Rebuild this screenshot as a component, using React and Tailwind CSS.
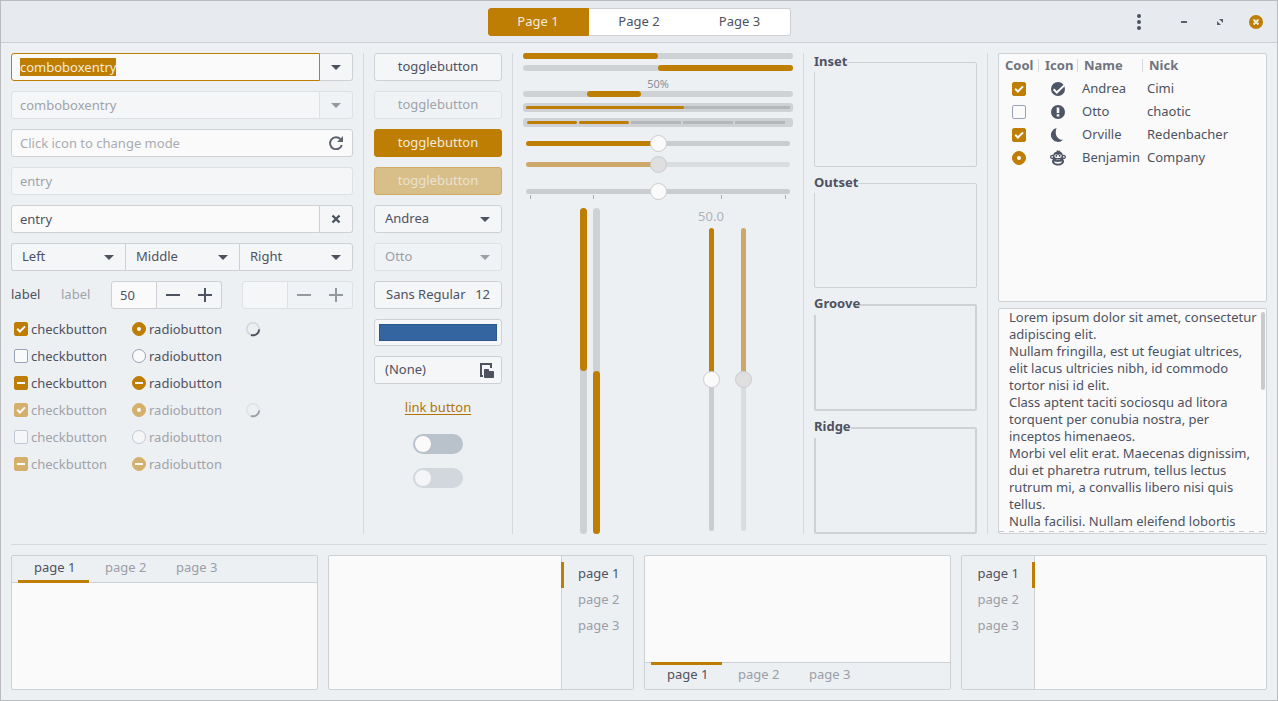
import { useEffect, useRef } from "react";

const LOREM = [
  "Lorem ipsum dolor sit amet, consectetur",
  "adipiscing elit.",
  "Nullam fringilla, est ut feugiat ultrices,",
  "elit lacus ultricies nibh, id commodo",
  "tortor nisi id elit.",
  "Class aptent taciti sociosqu ad litora",
  "torquent per conubia nostra, per",
  "inceptos himenaeos.",
  "Morbi vel elit erat. Maecenas dignissim,",
  "dui et pharetra rutrum, tellus lectus",
  "rutrum mi, a convallis libero nisi quis",
  "tellus.",
  "Nulla facilisi. Nullam eleifend lobortis",
].join("\n");

const noop = () => {};

function Arrow({ className = "" }) {
  return (
    <svg viewBox="0 0 10 5" className={`h-[5px] w-[10px] fill-current ${className}`} aria-hidden="true">
      <path d="M0 0h10L5 5z" />
    </svg>
  );
}

function Combo({ label, disabled, joined, className = "" }) {
  return (
    <div className={`relative flex h-7 min-w-0 ${disabled ? "text-[#9a9ea6]" : "text-[#4d5261]"}`}>
      <select
        aria-label={label}
        disabled={disabled}
        className={`w-full appearance-none border pr-7 pb-px pl-[10px] opacity-100 outline-none ${
          disabled ? "border-[#dde0e4] bg-[#f0f3f6]" : "border-[#cdd0d4] bg-[#f5f6f8]"
        } ${joined ? "border-r-0" : ""} ${className}`}
      >
        <option>{label}</option>
      </select>
      <Arrow className={`pointer-events-none absolute top-[12px] ${joined ? "right-[11px]" : "right-[12px]"}`} />
    </div>
  );
}

function Entry({ label, disabled, className = "", inputRef, ...rest }) {
  return (
    <input
      ref={inputRef}
      type="text"
      aria-label={label}
      disabled={disabled}
      className={`h-7 min-w-0 flex-1 border px-2 pb-px outline-none ${
        disabled ? "border-[#dde0e4] bg-[#f5f6f8] text-[#9fa3aa]" : "bg-[#fafafa] text-[#4d5261]"
      } ${className}`}
      {...rest}
    />
  );
}

function SideButton({ label, disabled, children }) {
  return (
    <button
      type="button"
      aria-label={label}
      disabled={disabled}
      className={`flex h-7 w-[33px] items-center justify-center rounded-r-[3px] border border-l-0 ${
        disabled ? "border-[#dde0e4] bg-[#f0f3f6] text-[#94989f]" : "border-[#cdd0d4] bg-[#f5f6f8] text-[#4d5261]"
      }`}
    >
      {children}
    </button>
  );
}

function Spin({ label, value, disabled }) {
  const tone = disabled ? "border-[#dde0e4] bg-[#f0f3f6] text-[#94989f]" : "border-[#cdd0d4] bg-[#f5f6f8] text-[#4d5261]";
  return (
    <div className="flex w-[111px]">
      <input
        type="text"
        inputMode="numeric"
        aria-label={label}
        disabled={disabled}
        defaultValue={value}
        className={`h-7 w-[46px] rounded-l-[3px] border px-2 pb-px outline-none ${
          disabled ? "border-[#dde0e4] bg-[#f5f6f8]" : "border-[#cdd0d4] bg-[#fafafa] text-[#4d5261]"
        }`}
      />
      <div className={`flex flex-1 rounded-r-[3px] border border-l-0 ${tone}`}>
        <button type="button" disabled={disabled} aria-label="Decrease" className="flex flex-1 items-center justify-center">
          <svg viewBox="0 0 14 14" className="h-[14px] w-[14px] fill-current"><path d="M0 6h14v2H0z" /></svg>
        </button>
        <button type="button" disabled={disabled} aria-label="Increase" className="flex flex-1 items-center justify-center">
          <svg viewBox="0 0 14 14" className="h-[14px] w-[14px] fill-current"><path d="M0 6h6V0h2v6h6v2H8v6H6V8H0z" /></svg>
        </button>
      </div>
    </div>
  );
}

function Mark({ type, state, disabled, label, name }) {
  const on = state !== "off";
  return (
    <span className="inline-grid h-[14px] w-[14px] shrink-0 place-items-center">
      <input
        type={type}
        name={name}
        aria-label={label}
        disabled={disabled}
        checked={state === "on"}
        onChange={noop}
        ref={(el) => {
          if (el) el.indeterminate = state === "mixed";
        }}
        className={`col-start-1 row-start-1 h-[14px] w-[14px] appearance-none border ${
          type === "radio" ? "rounded-full" : "rounded-[2px]"
        } ${
          on
            ? disabled ? "border-[#d5b06c] bg-[#d5b06c]" : "border-[#be7d03] bg-[#be7d03]"
            : disabled ? "border-[#c2c8d3] bg-[#f4f6f8]" : "border-[#98a3b8] bg-[#fafafa]"
        }`}
      />
      {on && (
        <svg viewBox="0 0 14 14" className="pointer-events-none col-start-1 row-start-1 h-[14px] w-[14px]" aria-hidden="true">
          {state === "mixed" && <path d="M3 6h8v2H3z" fill="#fafafa" />}
          {state === "on" && type === "radio" && <circle cx="7" cy="7" r="2" fill="#fafafa" />}
          {state === "on" && type === "checkbox" && <path d="M3.2 6.8l2.7 2.700L11 4.400" fill="none" stroke="#fafafa" strokeWidth="2" />}
        </svg>
      )}
    </span>
  );
}

function Option({ type, state, disabled, name }) {
  return (
    <label className={`flex h-5 items-center gap-[3px] pl-[3px] ${disabled ? "text-[#9fa3aa]" : ""}`}>
      <Mark type={type} state={state} disabled={disabled} name={name} />
      {type === "radio" ? "radiobutton" : "checkbutton"}
    </label>
  );
}

function Spinner({ dim }) {
  return (
    <svg viewBox="0 0 14 14" className={`ml-[3px] h-[14px] w-[14px] self-center overflow-visible ${dim ? "opacity-50" : ""}`} role="img" aria-label="Busy">
      <circle cx="7" cy="7" r="6.200" fill="none" stroke="#d3d6da" strokeWidth="1.600" />
      <path d="M13.200 7.500A6.200 6.200 0 0 1 5 13" fill="none" stroke="#4d5261" strokeWidth="2" />
    </svg>
  );
}

function Toggle({ className, disabled, pressed }) {
  return (
    <button type="button" disabled={disabled} aria-pressed={!!pressed} className={`h-7 rounded-[3px] border pb-px text-center ${className}`}>
      togglebutton
    </button>
  );
}

function Switch({ disabled, label }) {
  return (
    <div className="flex h-6 items-center justify-center">
      <button
        type="button"
        role="switch"
        aria-checked="false"
        aria-label={label}
        disabled={disabled}
        className={`flex h-5 w-[50px] items-center rounded-full px-[2px] ${disabled ? "bg-[#d1d7dc]" : "bg-[#b9c1cb]"}`}
      >
        <span className={`h-4 w-4 rounded-full ${disabled ? "bg-[#f3f5f6]" : "bg-[#fafafa]"}`} />
      </button>
    </div>
  );
}

const THUMB =
  "block m-0 appearance-none rounded-full outline-none [&::-webkit-slider-thumb]:h-[17px] [&::-webkit-slider-thumb]:w-[17px] [&::-webkit-slider-thumb]:appearance-none [&::-webkit-slider-thumb]:rounded-full [&::-webkit-slider-thumb]:border [&::-webkit-slider-thumb]:border-[#cbccd0]";
const THUMB_ON = "[&::-webkit-slider-thumb]:bg-[#fafafa]";
const THUMB_OFF = "[&::-webkit-slider-thumb]:bg-[#dfdfdf]";

function Separator() {
  return <div className="bg-[#d5d8dc]" />;
}

function Frame({ title, thick }) {
  return (
    <fieldset className={`min-h-0 min-w-0 flex-1 rounded-[2px] border-[#cfd2d5] ${thick ? "border-2" : "border"}`}>
      <legend className={`font-bold ${thick ? "-ml-[2px] h-5" : "-ml-px h-[19px]"}`}>{title}</legend>
    </fieldset>
  );
}

const ICONS = {
  check: (
    <svg viewBox="0 0 16 16" className="ml-[11px] h-4 w-4">
      <circle cx="8" cy="8" r="7" fill="#4d5566" />
      <path d="M3.600 8.200l3.200 3.300L15 3.600" fill="none" stroke="#fafafa" strokeWidth="2" />
    </svg>
  ),
  alert: (
    <svg viewBox="0 0 16 16" className="ml-[11px] h-4 w-4">
      <circle cx="8" cy="8" r="7" fill="#4d5566" />
      <path d="M6.700 3.500h2.600V9H6.700zM6.700 10.200h2.600v2.200H6.700z" fill="#fafafa" />
    </svg>
  ),
  moon: (
    <svg viewBox="0 0 16 16" className="ml-[11px] h-4 w-4">
      <path d="M6.600 1A7 7 0 1 0 13 12.700C7.400 13 4 7 6.600 1z" fill="#4d5566" />
    </svg>
  ),
  monkey: (
    <svg viewBox="0 0 16 16" className="ml-[11px] h-4 w-4">
      <path d="M7 0l1.500 1.100L10.300.4 9.800 1.600c1.700.5 2.700 1.800 3 3.300 1.600-.3 3.200.6 3.200 2S14.500 9.200 13 8.900c.7.700 1 1.500 1 2.300 0 2.600-2.600 4.300-6 4.300s-6-1.700-6-4.300c0-.8.3-1.600 1-2.300C1.500 9.200 0 8.300 0 6.900s1.600-2.300 3.200-2C3.500 3.200 5 1.800 6.800 1.400z" fill="#4d5566" />
      <path d="M4.400 5.800c0-1.600 3-1.900 3.600-.5.6-1.400 3.600-1.100 3.600.5 0 1.500-.9 2.200-2 2.200H6.400c-1.100 0-2-.7-2-2.200z" fill="#fafafa" />
      <path d="M1.300 6.900c0-.6.700-1 1.500-.9v1.800c-.8.100-1.500-.3-1.500-.9zM14.700 6.900c0-.6-.7-1-1.500-.9v1.800c.8.100 1.500-.3 1.500-.9zM4 11.300c1 .8 7 .8 8 0-.3 1.800-2 2.500-4 2.500s-3.700-.7-4-2.500z" fill="#fafafa" />
      <path d="M5.600 5h1.500v1.800H5.600zM8.900 5h1.500v1.800H8.900z" fill="#4d5566" />
      <path d="M6.600 9h1v.7h-1zM8.600 9h1v.7h-1z" fill="#fafafa" />
    </svg>
  ),
};

const PEOPLE = [
  ["checkbox", "on", "check", "Andrea", "Cimi"],
  ["checkbox", "off", "alert", "Otto", "chaotic"],
  ["checkbox", "on", "moon", "Orville", "Redenbacher"],
  ["radio", "on", "monkey", "Benjamin", "Company"],
];

const MARKS = {
  top: "shadow-[inset_0_-3px_#be7d03]",
  bottom: "shadow-[inset_0_3px_#be7d03]",
  right: "shadow-[inset_3px_0_#be7d03]",
  left: "shadow-[inset_-3px_0_#be7d03]",
};
const OUTER = { top: "flex-col", bottom: "flex-col-reverse", right: "flex-row-reverse", left: "flex-row" };
const STRIP = {
  top: "h-[27px] px-[6px] border-b",
  bottom: "h-[27px] px-[6px] border-t",
  right: "w-[72px] flex-col py-[6px] border-l",
  left: "w-[73px] flex-col py-[6px] border-r",
};
const TAB = {
  top: "-mb-px w-[71px] pl-4 pb-1",
  bottom: "-mt-px w-[71px] pl-4 pb-[2px]",
  right: "-ml-px h-[26px] pb-[3px] pl-[17px]",
  left: "-mr-px h-[26px] pb-[3px] pl-4",
};

function Notebook({ side }) {
  return (
    <div className={`flex h-[135px] overflow-hidden rounded-[2px] border border-[#cdd0d4] bg-[#fafafa] ${OUTER[side]}`}>
      <div role="tablist" aria-label={`Tabs ${side}`} className={`flex shrink-0 border-[#cdd0d4] bg-[#edf0f3] ${STRIP[side]}`}>
        {["page 1", "page 2", "page 3"].map((t, i) => (
          <button
            key={t}
            type="button"
            role="tab"
            aria-selected={i === 0}
            className={`text-left ${TAB[side]} ${i === 0 ? MARKS[side] : "text-[#9a9ea6]"}`}
          >
            {t}
          </button>
        ))}
      </div>
    </div>
  );
}

const STATES = [
  ["on", false],
  ["off", false],
  ["mixed", false],
  ["on", true],
  ["off", true],
  ["mixed", true],
];

const PAGES = [
  ["Page 1", "rounded-l-[3px] border border-[#be7d03] bg-[#be7d03] text-[#f3ead9]"],
  ["Page 2", "border-y border-[#cdd0d4] bg-white"],
  ["Page 3", "rounded-r-[3px] border-y border-r border-[#cdd0d4] bg-white"],
];

export default function App() {
  const first = useRef(null);
  useEffect(() => {
    first.current.focus();
    first.current.select();
  }, []);

  return (
    <div className="flex min-h-screen flex-col border border-[#b9bbbe] bg-[#edf0f3] font-['Noto_Sans',sans-serif] text-[13px] leading-[17px] text-[#4d5261]">
      <header className="grid h-[42px] grid-cols-[1fr_auto_1fr] items-center border-b border-[#cbced2] bg-[#e7eaee]">
        <div />
        <div role="tablist" aria-label="Pages" className="flex">
          {PAGES.map(([t, tone], i) => (
            <button key={t} type="button" role="tab" aria-selected={i === 0} className={`h-7 w-[101px] ${tone}`}>
              {t}
            </button>
          ))}
        </div>
        <div className="flex items-center justify-end pr-[14px]">
          <button type="button" aria-label="Menu" className="mr-[31px] flex w-[14px] justify-center">
            <svg viewBox="0 0 4 16" className="h-4 w-1 fill-[#4d5261]"><circle cx="2" cy="2" r="2" /><circle cx="2" cy="8" r="2" /><circle cx="2" cy="14" r="2" /></svg>
          </button>
          <div className="flex gap-[22px]">
            <button type="button" aria-label="Minimize">
              <svg viewBox="0 0 14 14" className="h-[14px] w-[14px] fill-[#5c616c]"><path d="M4 6h6v2H4z" /></svg>
            </button>
            <button type="button" aria-label="Maximize">
              <svg viewBox="0 0 14 14" className="h-[14px] w-[14px] fill-[#5c616c]"><path d="M6 4h4v4zM4 6v4h4z" /></svg>
            </button>
            <button type="button" aria-label="Close">
              <svg viewBox="0 0 14 14" className="h-[14px] w-[14px]">
                <circle cx="7" cy="7" r="7" fill="#be7d03" />
                <path d="M4.500 4.500l5 5M9.500 4.500l-5 5" stroke="#f3ead9" strokeWidth="2" />
              </svg>
            </button>
          </div>
        </div>
      </header>

      <main className="flex flex-1 flex-col gap-[10px] p-[10px]">
        <div className="grid flex-1 grid-cols-[342fr_1px_128fr_1px_270fr_1px_163fr_1px_269fr] gap-x-[10px]">
          <section className="flex min-w-0 flex-col gap-[10px]">
            <div className="flex">
              <Entry inputRef={first} label="Combo box entry" defaultValue="comboboxentry" className="rounded-l-[3px] border-[#be7d03] selection:bg-[#be7d03] selection:text-[#f3ead9]" />
              <SideButton label="Open list"><Arrow /></SideButton>
            </div>
            <div className="flex">
              <Entry disabled label="Combo box entry, disabled" defaultValue="comboboxentry" className="rounded-l-[3px]" />
              <SideButton disabled label="Open disabled list"><Arrow /></SideButton>
            </div>
            <div className="flex h-7 items-center rounded-[3px] border border-[#cdd0d4] bg-[#fafafa] pr-[9px]">
              <input type="text" aria-label="Mode" placeholder="Click icon to change mode" className="h-full min-w-0 flex-1 px-2 pb-px outline-none placeholder:text-[#a9acb1]" />
              <button type="button" aria-label="Change mode">
                <svg viewBox="0 0 14 14" className="h-[14px] w-[14px]">
                  <path d="M11.500 3.200A6 6 0 1 0 12.800 9" fill="none" stroke="#5f6470" strokeWidth="2" />
                  <path d="M14 0v6H8z" fill="#5f6470" />
                </svg>
              </button>
            </div>
            <div className="flex"><Entry disabled label="Entry, disabled" defaultValue="entry" className="rounded-[3px]" /></div>
            <div className="flex">
              <Entry label="Entry" defaultValue="entry" className="rounded-l-[3px] border-[#cdd0d4]" />
              <SideButton label="Clear">
                <svg viewBox="0 0 10 10" className="h-[10px] w-[10px]"><path d="M1.500 1.500l7 7M8.500 1.500l-7 7" stroke="#4d5261" strokeWidth="2.400" /></svg>
              </SideButton>
            </div>
            <div className="grid grid-cols-3">
              <Combo label="Left" joined className="rounded-l-[3px]" />
              <Combo label="Middle" joined />
              <Combo label="Right" className="rounded-r-[3px]" />
            </div>
            <div className="flex items-center gap-5">
              <span className="w-[30px] pb-[2px]">label</span>
              <span className="w-[30px] pb-[2px] text-[#9fa3aa]">label</span>
              <Spin label="Amount" value="50" />
              <Spin label="Amount, disabled" value="" disabled />
            </div>
            <div className="grid grid-cols-[118px_114px_1fr] gap-y-[7px]">
              {STATES.map(([state, disabled], i) => (
                <div key={i} className="contents">
                  <Option type="checkbox" state={state} disabled={disabled} />
                  <Option type="radio" state={state} disabled={disabled} name={`radio-${i}`} />
                  {state === "on" ? <Spinner dim={disabled} /> : <span />}
                </div>
              ))}
            </div>
          </section>

          <Separator />

          <section className="flex min-w-0 flex-col gap-[10px]">
            <Toggle className="border-[#cdd0d4] bg-[#f5f6f8]" />
            <Toggle disabled className="border-[#dde0e4] bg-[#f0f3f6] text-[#9fa3aa]" />
            <Toggle pressed className="border-[#be7d03] bg-[#be7d03] text-[#f3ead9]" />
            <Toggle pressed disabled className="border-[#d3ab64] bg-[#d8be88] text-[#e9e2d2]" />
            <Combo label="Andrea" className="rounded-[3px]" />
            <Combo label="Otto" disabled className="rounded-[3px]" />
            <button type="button" className="flex h-7 items-center justify-between rounded-[3px] border border-[#cdd0d4] bg-[#f5f6f8] px-[11px] pb-px">
              <span>Sans Regular</span>
              <span>12</span>
            </button>
            <button type="button" aria-label="Pick a colour" className="h-[27px] rounded-[3px] border border-[#cdd0d4] bg-[#f5f6f8] p-1">
              <span className="block h-[17px] border border-[#2b588c] bg-[#3465a0]" />
            </button>
            <button type="button" className="flex h-7 items-center justify-between rounded-[3px] border border-[#cdd0d4] bg-[#f5f6f8] pr-[6px] pb-px pl-[10px]">
              <span>(None)</span>
              <svg viewBox="0 0 16 16" className="h-4 w-4 fill-[#4d5261]">
                <path d="M1 1h12v5h-2V3H3v10h1v2H1z" />
                <path d="M5 8c0-.6.4-1 1-1h3c.8 0 1 .4 1 1v1h4c.6 0 1 .4 1 1v5c0 .6-.4 1-1 1H6c-.6 0-1-.4-1-1z" />
              </svg>
            </button>
            <div className="flex h-7 items-center justify-center pb-[2px]">
              <a href="#link" className="text-[#b27503] underline underline-offset-2">link button</a>
            </div>
            <Switch label="Switch" />
            <Switch label="Switch, disabled" disabled />
          </section>

          <Separator />

          <section className="flex min-w-0 flex-col">
            <div className="flex flex-col gap-[6px]">
              <div role="progressbar" aria-label="Progress" aria-valuenow={50} className="h-[6px] rounded-full bg-[#ced2d5]">
                <div className="h-full w-1/2 rounded-full bg-[#be7d03]" />
              </div>
              <div role="progressbar" aria-label="Progress, inverted" aria-valuenow={50} className="flex h-[6px] justify-end rounded-full bg-[#ced2d5]">
                <div className="h-full w-1/2 rounded-full bg-[#be7d03]" />
              </div>
              <div>
                <div className="h-[14px] text-center text-[11px] leading-[14px] text-[#8a8e98]">50%</div>
                <div role="progressbar" aria-label="Activity" className="flex h-[6px] rounded-full bg-[#ced2d5] pl-16">
                  <div className="h-full w-[54px] rounded-full bg-[#be7d03]" />
                </div>
              </div>
              <div role="meter" aria-label="Level" aria-valuenow={3} aria-valuemax={5} className="h-[9px] rounded-[3px] bg-[#ced2d5] p-[3px]">
                <div className="h-[3px] bg-[#b3b7ba]"><div className="h-full w-3/5 rounded-full bg-[#be7d03]" /></div>
              </div>
              <div role="meter" aria-label="Level in blocks" aria-valuenow={2} aria-valuemax={5} className="flex h-[9px] gap-[2px] rounded-[3px] bg-[#ced2d5] py-[3px] pr-2 pl-1">
                {[0, 1, 2, 3, 4].map((i) => (
                  <span key={i} className={`h-[3px] flex-1 ${i < 2 ? "rounded-full bg-[#be7d03]" : "bg-[#b3b7ba]"}`} />
                ))}
              </div>
            </div>
            <div className="flex flex-col px-[3px] pt-[14px]">
              <input type="range" aria-label="Scale" defaultValue="50" className={`h-[5px] w-full bg-[linear-gradient(to_right,#be7d03_50%,#cbccd0_50%)] ${THUMB} ${THUMB_ON}`} />
              <input type="range" aria-label="Scale, disabled" disabled defaultValue="50" className={`mt-4 h-[5px] w-full bg-[linear-gradient(to_right,#cca969_50%,#dadde0_50%)] ${THUMB} ${THUMB_OFF}`} />
              <input type="range" aria-label="Scale with marks" defaultValue="50" className={`mt-[22px] h-[5px] w-full bg-[#cbccd0] ${THUMB} ${THUMB_ON}`} />
              <svg viewBox="0 0 264 6" preserveAspectRatio="none" className="h-[6px] w-full fill-[#a9acb0]" aria-hidden="true">
                <path d="M4 1h1v4H4zM67 1h1v4h-1zM195 1h1v4h-1zM259 1h1v4h-1z" />
              </svg>
            </div>
            <div className="mt-2 grid flex-1 grid-cols-2 gap-x-[10px]">
              <div className="flex justify-center gap-[6px] pl-1">
                <div role="progressbar" aria-label="Vertical progress" aria-valuenow={50} className="flex w-[7px] flex-col rounded-full bg-[#ced2d5]">
                  <div className="flex-1 rounded-full bg-[#be7d03]" />
                  <div className="flex-1" />
                </div>
                <div role="progressbar" aria-label="Vertical progress, inverted" aria-valuenow={50} className="flex w-[7px] flex-col rounded-full bg-[#ced2d5]">
                  <div className="flex-1" />
                  <div className="flex-1 rounded-full bg-[#be7d03]" />
                </div>
              </div>
              <div className="flex justify-center pr-[2px] pb-[3px]">
                <div className="flex w-8 flex-col items-center">
                  <span className="h-5 text-[#b0b3b8]">50.0</span>
                  <input type="range" aria-label="Vertical scale" defaultValue="50" className={`min-h-0 w-[5px] flex-1 bg-[linear-gradient(to_bottom,#be7d03_50%,#cbccd0_50%)] [writing-mode:vertical-lr] ${THUMB} ${THUMB_ON}`} />
                </div>
                <div className="flex w-8 flex-col items-center pt-5">
                  <input type="range" aria-label="Vertical scale, disabled" disabled defaultValue="50" className={`min-h-0 w-[5px] flex-1 bg-[linear-gradient(to_bottom,#cca969_50%,#dadde0_50%)] [writing-mode:vertical-lr] ${THUMB} ${THUMB_OFF}`} />
                </div>
              </div>
            </div>
          </section>

          <Separator />

          <section className="flex min-w-0 flex-col gap-[7px]">
            <Frame title="Inset" />
            <Frame title="Outset" />
            <Frame title="Groove" thick />
            <Frame title="Ridge" thick />
          </section>

          <Separator />

          <section className="flex min-w-0 flex-col gap-[6px]">
            <div className="flex-1 rounded-[2px] border border-[#cdd0d4] bg-[#fafafa]">
              <table className="w-full table-fixed border-collapse text-left">
                <colgroup>
                  <col className="w-10" />
                  <col className="w-[39px]" />
                  <col className="w-[65px]" />
                  <col />
                </colgroup>
                <thead>
                  <tr className="h-[23px] text-[#70747e]">
                    {["Cool", "Icon", "Name", "Nick"].map((h, i) => (
                      <th key={h} className="p-0 font-bold">
                        <span className={`block h-[13px] pl-[6px] leading-[13px] ${i < 3 ? "border-r border-[#d5d8dc]" : ""}`}>{h}</span>
                      </th>
                    ))}
                  </tr>
                </thead>
                <tbody>
                  {PEOPLE.map(([type, state, icon, name, nick]) => (
                    <tr key={name} className="h-[23px]">
                      <td className="p-0"><span className="flex justify-center"><Mark type={type} state={state} label={`${name} is cool`} /></span></td>
                      <td className="p-0">{ICONS[icon]}</td>
                      <td className="p-0 pl-1 whitespace-nowrap">{name}</td>
                      <td className="p-0 pl-1">{nick}</td>
                    </tr>
                  ))}
                </tbody>
              </table>
            </div>
            <div className="relative flex h-[226px] flex-col rounded-[2px] border border-[#cdd0d4] bg-[#fafafa]">
              <textarea aria-label="Text" defaultValue={LOREM} className="block h-[222px] w-full resize-none overflow-hidden pl-[10px] whitespace-pre outline-none" />
              <div className="h-px bg-[repeating-linear-gradient(to_right,#c3c6ca_0px_5px,transparent_5px_10px)]" />
              <div className="absolute top-[3px] right-[1px] h-[78px] w-1 rounded-full bg-[#c8cacd]" />
            </div>
          </section>
        </div>

        <hr className="border-[#d5d8dc]" />

        <div className="grid grid-cols-4 gap-[10px]">
          <Notebook side="top" />
          <Notebook side="right" />
          <Notebook side="bottom" />
          <Notebook side="left" />
        </div>
      </main>
    </div>
  );
}
